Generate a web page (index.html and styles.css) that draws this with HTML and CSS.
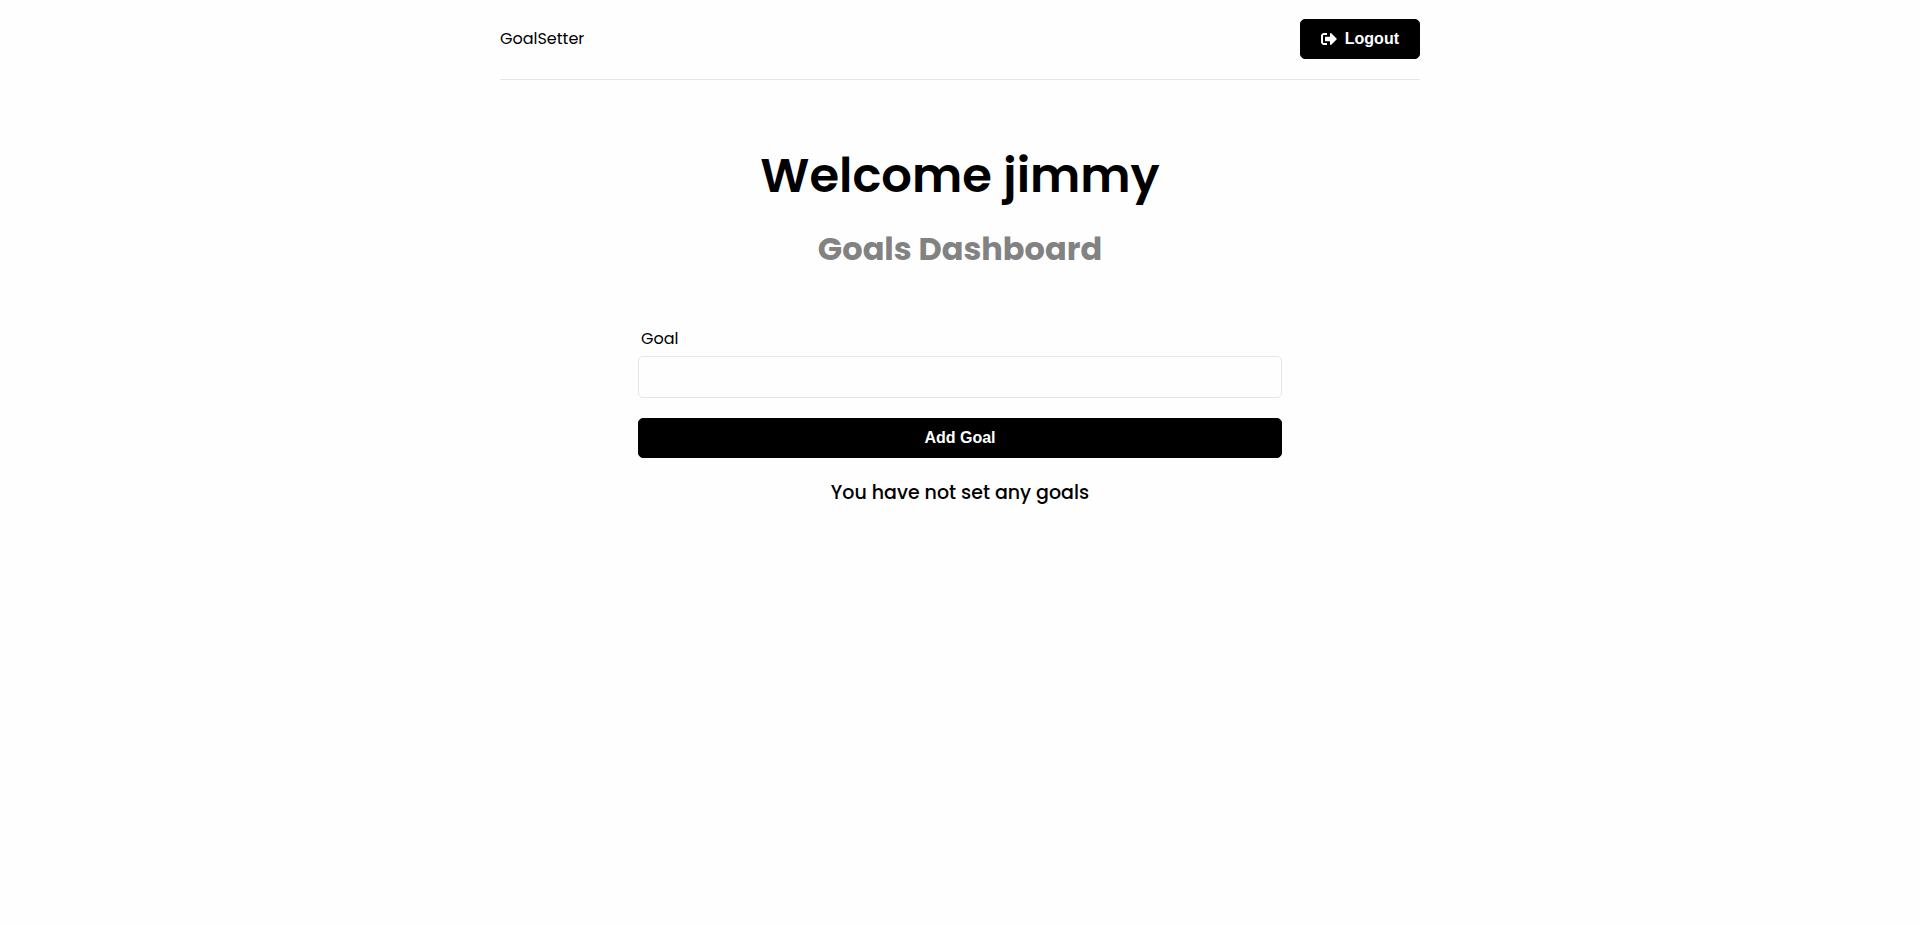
FILE: index.html
```html
<!DOCTYPE html>
<html lang="en">
<head>
  <meta charset="utf-8">
  <meta name="viewport" content="width=device-width, initial-scale=1">
  <title>GoalSetter</title>
  <link rel="stylesheet" href="styles.css">
</head>
<body>
  <div class="container">
    <header class="header">
      <a class="logo" href="#">GoalSetter</a>
      <button class="btn" type="button">
        <svg class="btn-icon" viewBox="0 0 512 512" fill="currentColor" aria-hidden="true"><path d="M497 273L329 441c-15 15-41 4.500-41-17v-96H152c-13.300 0-24-10.700-24-24v-96c0-13.300 10.700-24 24-24h136V88c0-21.400 25.900-32 41-17l168 168c9.300 9.400 9.300 24.600 0 34zM192 436v-40c0-6.600-5.400-12-12-12H96c-17.700 0-32-14.300-32-32V160c0-17.700 14.300-32 32-32h84c6.600 0 12-5.400 12-12V76c0-6.600-5.400-12-12-12H96c-53 0-96 43-96 96v192c0 53 43 96 96 96h84c6.600 0 12-5.400 12-12z"/></svg>
        Logout
      </button>
    </header>
    <main>
      <section class="heading">
        <h1 class="title">Welcome jimmy</h1>
        <p class="subtitle">Goals Dashboard</p>
      </section>
      <form class="form">
        <label class="label" for="goal">Goal</label>
        <input class="input" type="text" id="goal" name="goal">
        <button class="btn btn-block" type="submit">Add Goal</button>
      </form>
      <h3 class="empty">You have not set any goals</h3>
    </main>
  </div>
</body>
</html>
```

FILE: styles.css
```css
* {
  box-sizing: border-box;
  margin: 0;
  padding: 0;
}

body {
  background: #fefefe;
  color: #000;
  font-family: Poppins, Inter, sans-serif;
  font-size: 16px;
  line-height: 26px;
}

.container {
  width: 100%;
  max-width: 960px;
  margin: 0 auto;
  padding: 0 20px;
  text-align: center;
}

.header {
  display: flex;
  justify-content: space-between;
  align-items: center;
  padding: 19px 0 20px;
  margin-bottom: 60px;
  border-bottom: 1px solid #e6e6e6;
}

.logo {
  color: #000;
  text-decoration: none;
}

.btn {
  display: flex;
  align-items: center;
  justify-content: center;
  gap: 8px;
  height: 40px;
  padding: 0 20px;
  border: 1px solid #000;
  border-radius: 5px;
  background: #000;
  color: #fff;
  font-family: "Liberation Sans", Arial, sans-serif;
  font-size: 16px;
  font-weight: 700;
  cursor: pointer;
}

.btn-icon {
  width: 16px;
  height: 16px;
}

.btn-block {
  width: 100%;
}

.heading {
  display: grid;
  gap: 13px;
  margin-bottom: 53px;
}

.title {
  font-size: 48px;
  font-weight: 600;
  line-height: 72px;
}

.subtitle {
  color: #828282;
  font-size: 32px;
  font-weight: 700;
  line-height: 48px;
}

.form {
  width: 70%;
  margin: 0 auto 20px;
}

.label {
  display: block;
  margin: 0 0 4px 3px;
  text-align: left;
}

.input {
  display: block;
  width: 100%;
  height: 42px;
  margin-bottom: 20px;
  padding: 10px;
  border: 1px solid #e6e6e6;
  border-radius: 5px;
  background: #fefefe;
  font: inherit;
}

.empty {
  font-size: 19px;
  font-weight: 500;
  line-height: 30px;
}
```
